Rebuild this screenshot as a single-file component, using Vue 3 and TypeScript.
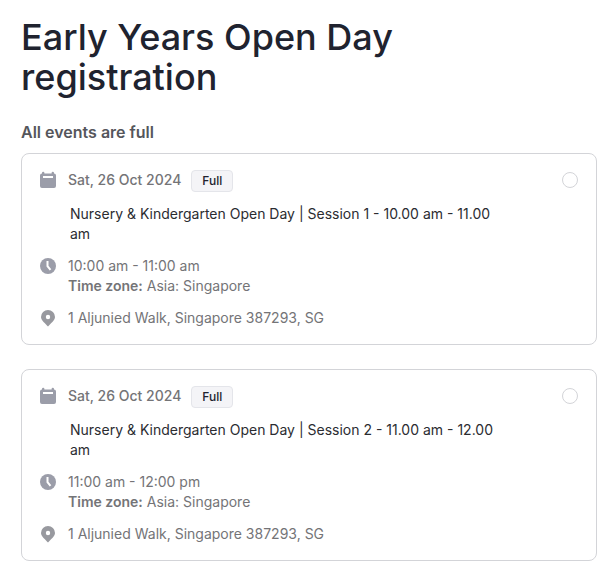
<script setup lang="ts">
import { ref } from 'vue'

interface EventSession {
  id: number
  date: string
  title: string
  time: string
  zone: string
  place: string
}

const selected = ref<number | null>(null)
const sessions: EventSession[] = [
  {
    id: 1,
    date: 'Sat, 26 Oct 2024',
    title: 'Nursery & Kindergarten Open Day | Session 1 - 10.00 am - 11.00 am',
    time: '10:00 am - 11:00 am',
    zone: 'Asia: Singapore',
    place: '1 Aljunied Walk, Singapore 387293, SG',
  },
  {
    id: 2,
    date: 'Sat, 26 Oct 2024',
    title: 'Nursery & Kindergarten Open Day | Session 2 - 11.00 am - 12.00 am',
    time: '11:00 am - 12:00 pm',
    zone: 'Asia: Singapore',
    place: '1 Aljunied Walk, Singapore 387293, SG',
  },
]
</script>

<template>
  <main class="page">
    <h1>Early Years Open Day registration</h1>
    <fieldset class="events">
      <legend>All events are full</legend>
      <label v-for="s in sessions" :key="s.id" class="card">
        <span class="details">
          <span class="row">
            <svg class="icon" viewBox="0 0 20 20" aria-hidden="true">
              <path fill-rule="evenodd" d="M4 3.500V3a1 1 0 0 1 2.400 0v.5h7.200V3a1 1 0 0 1 2.400 0v.5a2 2 0 0 1 2 2V16a2 2 0 0 1-2 2H4a2 2 0 0 1-2-2V5.500a2 2 0 0 1 2-2zM5 6v2h10V6z" />
            </svg>
            <span class="date">{{ s.date }}</span>
            <span class="badge">Full</span>
          </span>
          <span class="title">{{ s.title }}</span>
          <span class="row time">
            <svg class="icon" viewBox="0 0 20 20" aria-hidden="true">
              <circle cx="10" cy="10" r="8" />
              <path class="hands" d="M9.500 5v5.200l3 3.600" />
            </svg>
            <span>{{ s.time }}<br /><b>Time zone:</b> {{ s.zone }}</span>
          </span>
          <span class="row place">
            <svg class="icon" viewBox="0 0 20 20" aria-hidden="true">
              <path fill-rule="evenodd" d="M10 2a7 7 0 0 1 7 7c0 3.600-4.500 6.500-7 9.500-2.500-3-7-5.900-7-9.500a7 7 0 0 1 7-7zM10 6.800a2.200 2.200 0 1 0 0 4.400 2.200 2.200 0 0 0 0-4.400z" />
            </svg>
            <span>{{ s.place }}</span>
          </span>
        </span>
        <input v-model="selected" type="radio" name="session" :value="s.id" disabled />
      </label>
    </fieldset>
  </main>
</template>

<style>
body {
  background: #fff;
}
</style>

<style scoped>
.page {
  padding: 17px 19px 12px 21px;
  font-family: Inter, 'Liberation Sans', sans-serif;
  font-size: 14px;
  line-height: 20px;
  color: #747477;
}
h1 {
  max-width: 440px;
  margin: 0 0 25px;
  font-size: 36px;
  font-weight: 500;
  line-height: 40px;
  color: #20232f;
}
.events {
  min-width: 0;
  margin: 0;
  padding: 0;
  border: 0;
}
legend {
  margin-bottom: 11px;
  padding: 0;
  font-size: 16px;
  font-weight: 600;
  color: #55565c;
}
.card {
  display: flex;
  justify-content: space-between;
  align-items: flex-start;
  gap: 48px;
  padding: 16px 18px;
  border: 1px solid #d3d4d8;
  border-radius: 8px;
}
.card + .card {
  margin-top: 24px;
}
.details {
  display: flex;
  flex: 1;
  flex-direction: column;
  max-width: 460px;
}
.row {
  display: flex;
  align-items: flex-start;
}
.time,
.place {
  margin-top: 12px;
}
.icon {
  flex: none;
  width: 20px;
  height: 20px;
  margin-right: 10px;
  margin-left: -2px;
  fill: #9b9da9;
}
.place .icon {
  fill: #98999f;
}
.hands {
  fill: none;
  stroke: #fff;
  stroke-width: 2;
}
.date {
  font-weight: 500;
}
.badge {
  margin-left: 10px;
  padding: 0 10px;
  border: 1px solid #e4e5ea;
  border-radius: 4px;
  background: #f4f4f7;
  font-size: 12px;
  font-weight: 500;
  color: #20232f;
}
.title {
  margin: 12px 0 0 30px;
  color: #2b2c31;
}
b {
  font-weight: 600;
}
input {
  appearance: none;
  flex: none;
  width: 16px;
  height: 16px;
  margin: 2px 0 0;
  border: 1px solid #d3d4d8;
  border-radius: 50%;
  background: #fff;
}
</style>
